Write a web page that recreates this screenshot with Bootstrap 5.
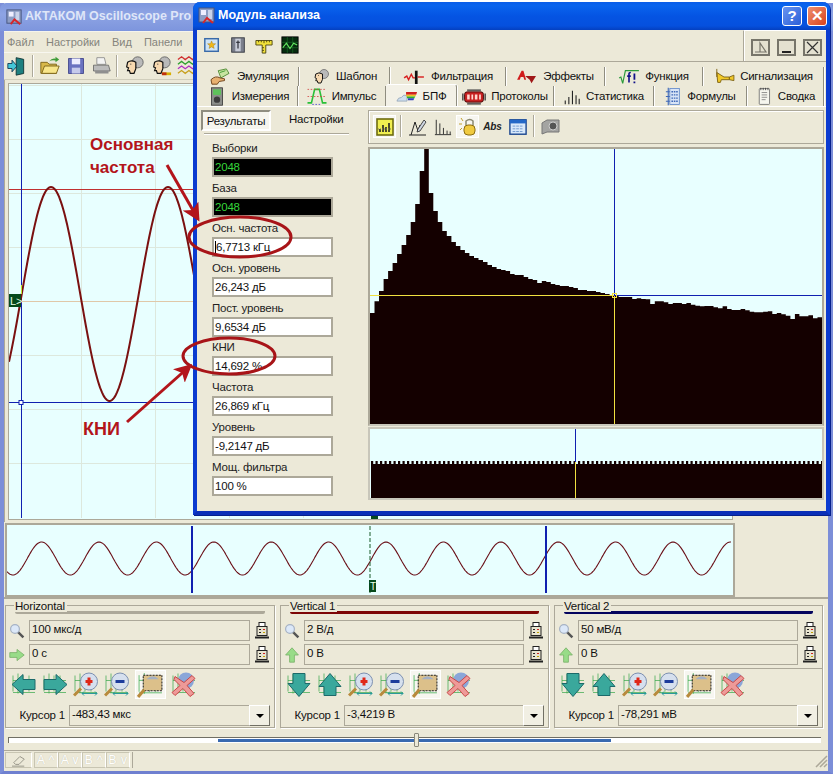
<!DOCTYPE html>
<html lang="ru">
<head>
<meta charset="UTF-8" />
<title>AKTAKOM Oscilloscope Pro</title>
<link href="https://cdn.jsdelivr.net/npm/bootstrap@5.3.2/dist/css/bootstrap.min.css" rel="stylesheet" />
<style>
html, body { margin: 0; background: #fff; }
body { position: relative; width: 834px; height: 774px; overflow: hidden; font: 11.5px/1.1 "Liberation Sans", Arial, sans-serif; letter-spacing: -.2px; color: #111; }
svg { display: block; flex: none; }

/* main window */
.app { width: 833px; height: 771px; margin-top: 3px; background: #ece9d8; border-left: 4px solid #7c8ed8; border-right: 5px solid #7c8ed8; border-bottom: 3px solid #6f80d0; }
.app-title { height: 28px; margin: 0 -5px 0 -4px; padding-left: 5px; gap: 1px; background: linear-gradient(#7f97de, #8ea4e4 40%, #7d95dd); color: #dfe6f8; font-size: 12.5px; font-weight: 700; letter-spacing: 0; border-radius: 6px 6px 0 0; }
.app-menu { height: 21px; gap: 12px; padding: 0 3px; color: #85847c; font-size: 11px; letter-spacing: 0; border-top: 1px solid #f5f4ec; }
.app-tools { height: 28px; padding-left: 3px; gap: 5px; border-top: 1px solid #f8f7f0; border-bottom: 1px solid #d0cdbb; }
.sep { width: 1px; height: 22px; background: #aca899; border-right: 1px solid #fff; box-sizing: content-box; }
.scope { height: 442px; padding: 3px 95px 2px 3px; border-left: 1px solid #aca899; }
.plot { background: #e8ffff; border: 1px solid #aca899; }
.overview { height: 75px; padding: 1px 93px 0 1px; }
.overview .plot { border-width: 2px; }

/* bottom panels */
.panels { gap: 5px; padding: 6px 5px 0 1px; height: 134px; border-top: 2px solid #aca899; }
.panel { width: 270px; height: 123px; border: 1px solid #aca899; box-shadow: 1px 1px 0 #fff; }
.panel + .panel { width: 269px; }
.panel-name { height: 9px; padding-left: 8px; margin-top: -4px; line-height: 9px; }
.panel-name span { background: #ece9d8; padding: 0 2px 0 1px; }
.panel-bar { height: 3px; margin: 0 9px 6px 9px; background: #aca899; border-radius: 0 0 2px 2px; }
.bar-red { background: #7d0606; }
.bar-blue { background: #04045e; }
.value-row { height: 21px; margin-bottom: 3px; padding: 0 4px 0 3px; gap: 4px; }
.value { flex: 1; height: 21px; padding: 2px; border: 1px solid #aca899; background: #ece9d8; }
.panel-tools { height: 32px; border-top: 1px solid #aca899; padding: 1px 0 0 5px; gap: 5px; }
.ptool { width: 26px; height: 29px; }
.ptool-on { width: 31px; background: #f7f6f0; border: 1px solid #fff; }
.cursor-row { height: 22px; margin-top: 5px; padding-right: 4px; }
.cursor-name { width: 63px; text-align: right; padding-right: 4px; padding-top: 4px; }
.cursor-box { flex: 1; height: 21px; border: 1px solid #aca899; padding: 2px; }
.drop { width: 21px; height: 21px; margin-left: -1px; background: #f1efe3; border: 1px solid; border-color: #fff #716f64 #716f64 #fff; }
.drop i { display: block; width: 0; border: 4px solid transparent; border-top: 4px solid #000; border-bottom: 0; }

/* slider and status */
.slider-row { height: 18px; padding: 6px 7px 0 4px; position: relative; }
.track { height: 6px; border-top: 1px solid #716f64; border-left: 1px solid #716f64; background: #fff; }
.track i { display: block; height: 3px; margin: 1px 0 0 209px; width: 393px; background: #3a6ab0; }
.thumb { position: absolute; left: 410px; top: 2px; width: 5px; height: 14px; background: #ece9d8; border: 1px solid #8a887c; border-radius: 1px; }
.status { height: 18px; border-top: 1px solid #aca899; margin-top: 1px; padding-left: 1px; }
.stat-btn { height: 16px; margin-top: 1px; width: 24px; border: 1px solid #c8c5b2; border-right-color: #fff; color: #fff; font-size: 12px; text-align: center; letter-spacing: .5px; padding-top: 1px; text-shadow: 0 0 1px #bdbaa8; }
.stat-btn.first { width: 27px; margin-right: 2px; padding: 0 4px; }
.stat-rest { flex: 1; height: 16px; margin: 1px 0 0 2px; border-left: 1px solid #aca899; }
.grip { margin: 1px 0 0 auto; }

/* analysis window */
.win { position: absolute; left: 193px; top: 2px; width: 637px; height: 513px; background: #ece9d8; border: 4px solid #0b3bd0; border-top: 0; border-bottom-color: #0a2fb8; border-radius: 7px 7px 0 0; box-shadow: 1px 1px 0 #06208c; }
.win-title { height: 28px; margin: 0 -4px; padding: 0 3px 0 4px; gap: 1px; background: linear-gradient(#0a5ce8, #0a64ee 12%, #0554e3 50%, #0550de 85%, #0440c0); color: #fff; font-size: 12.5px; font-weight: 700; letter-spacing: 0; border-radius: 7px 7px 0 0; }
.cap-btn { width: 20px; height: 20px; margin-left: 4px; border: 1px solid #fff; border-radius: 3px; color: #fff; font-size: 15px; text-align: center; line-height: 18px; background: linear-gradient(135deg, #6a94f0, #2a5fd8); }
.cap-close { background: linear-gradient(135deg, #ee9070, #d8431c); }
.win-bar { height: 32px; border-bottom: 1px solid #aca899; }
.win-icons { flex: 1; gap: 8px; padding: 6px 0 0 6px; }
.win-right { width: 83px; gap: 7px; padding: 2px 0 0 7px; border-left: 1px solid #aca899; border-top: 1px solid #fff; box-shadow: inset 1px 0 0 #fff; }
.mini { width: 19px; height: 17px; border: 2px solid #77756a; background: #e4e1d0; }
.tabs { display: grid; margin-left: 2px; width: 625px; }
.tabs-top { grid-template-columns: 100px 91px 116px 99px 98px 121px; height: 19px; margin-top: 5px; }
.tabs-low { grid-template-columns: 99px 88px 71px 97px 100px 93px 77px; height: 20px; }
.tabs .nav-link { display: flex; align-items: center; justify-content: center; gap: 5px; padding: 0; color: #111; font-size: 11.5px; letter-spacing: -.25px; border-right: 1px solid #8f8d80; box-shadow: 1px 0 0 #fff; border-radius: 0; height: 100%; white-space: nowrap; }
.tabs .nav-link.active { background: #f3f1e7; margin-top: -2px; height: 23px; border-top: 1px solid #fff; border-radius: 3px 3px 0 0; }
.win-body { height: 404px; border-top: 1px solid #fff; }
.left-col { width: 171px; }
.subtabs { height: 26px; padding: 3px 0 0 4px; }
.subtab { width: 70px; height: 21px; background: #f6f5ee; border: 2px solid; border-color: #8f8d80 #fff #fff #8f8d80; text-align: center; padding-top: 3px; }
.subtab2 { padding: 3px 0 0 18px; }
.rule { height: 2px; margin: 0 19px 2px 7px; background: #aca899; border-bottom: 1px solid #fff; }
.field-list { padding-left: 15px; }
.field { height: 39.9px; }
.field label { display: block; height: 20px; padding-top: 5px; margin: 0; color: #222; }
.field .form-control { width: 121px; height: 20px; padding: 1px; border: 2px solid #aca899; border-radius: 0; font-size: 11.5px; line-height: 14px; color: #111; background: #fff; }
.field .form-control.dark { background: #000; color: #35d43a; }
.caret { border-left: 1px solid #000; }
.right-col { width: 456px; }
.graph-tools { height: 34px; margin-top: 3px; border: 1px solid #aca899; box-shadow: inset 1px 1px 0 #fff; padding: 4px 0 0 4px; }
.gt { width: 23px; height: 23px; }
.gt + .gt { margin-left: 2px; }
.gt-on { background: #f7f6f0; border: 1px solid #fff; }
.gt-abs { font: italic 700 10px "Liberation Sans", Arial, sans-serif; text-align: center; padding-top: 6px; color: #222; }
.graph { width: 456px; }
.graph-main { height: 279px; margin-top: 3px; border: 2px solid #aca899; border-bottom-color: #c8c6ba; }
.graph-small { height: 73px; margin-top: 1px; border: 2px solid #c8c6ba; }

/* annotations drawn on top of the screenshot */
.marks { position: absolute; left: 0; top: 0; pointer-events: none; }
.note { position: absolute; color: #b3151b; font: 700 17px/23px "Liberation Sans", Arial, sans-serif; letter-spacing: 0; }
.note-freq { left: 90px; top: 133px; }
.note-thd { left: 83px; top: 418px; font-size: 18px; }
</style>
</head>
<body>

<svg width="0" height="0" class="position-absolute">
  <symbol id="i-app" viewBox="0 0 20 20"><rect x="2" y="2" width="15" height="14" fill="#8d9dc4" stroke="#47557f"/><rect x="4" y="4" width="5" height="5" fill="#eef"/><rect x="11" y="4" width="4" height="9" fill="#c9d3ea"/><path d="M6 17l4-5 6 5" fill="none" stroke="#d8262a" stroke-width="2"/></symbol>
  <symbol id="i-door" viewBox="0 0 24 24"><path d="M11 2l9 2v17l-9 2z" fill="#1d8080" stroke="#0a2b2b"/><path d="M1 9h5V5l6 7-6 7v-4H1z" fill="#45c6d6" stroke="#0a2b4a"/></symbol>
  <symbol id="i-folder" viewBox="0 0 24 24"><path d="M2 20V8h7l2 2h8v10z" fill="#d8b84a" stroke="#7c6418"/><path d="M3 20l3-8h16l-3 8z" fill="#f8e58a" stroke="#7c6418"/><path d="M11 7q3-4 7-3V2l4 3-4 3V6q-4-1-7 1z" fill="#3f9c38"/></symbol>
  <symbol id="i-floppy" viewBox="0 0 24 24"><path d="M3 3h18v18H3z" fill="#6a72c0" stroke="#3c4188"/><rect x="7" y="3" width="10" height="7" fill="#eef"/><rect x="7" y="14" width="10" height="7" fill="#c6caeb"/></symbol>
  <symbol id="i-printer" viewBox="0 0 24 24"><path d="M7 2h9l2 8H7z" fill="#f3f3f3" stroke="#888"/><path d="M3 11h18l2 7H3z" fill="#bbb" stroke="#666"/><path d="M5 18h16v3H5z" fill="#8f8f8f"/></symbol>
  <symbol id="i-face" viewBox="0 0 24 24"><circle cx="16" cy="8" r="6" fill="#b9b9b9" stroke="#666"/><path d="M5 8q4-3 9 0v7l-2 5H8l-1-3H5l1-3-2-1z" fill="#f7d9b0" stroke="#111" stroke-width="1.3"/><path d="M8 10h1" stroke="#111"/></symbol>
  <symbol id="i-face2" viewBox="0 0 24 24"><use href="#i-face"/><rect x="13" y="19" width="10" height="3" fill="#d8b000"/><rect x="13" y="19" width="5" height="3" fill="#c03010"/></symbol>
  <symbol id="i-wave" viewBox="0 0 24 24"><g fill="none" stroke-width="1.4"><path d="M1 5l4-3 4 3 4-3 4 3 4-3" stroke="#d03030"/><path d="M1 10l4-3 4 3 4-3 4 3 4-3" stroke="#30a030"/><path d="M1 15l4-3 4 3 4-3 4 3 4-3" stroke="#b030c0"/><path d="M1 20l4-3 4 3 4-3 4 3 4-3" stroke="#c8a020"/></g></symbol>
  <symbol id="i-star" viewBox="0 0 20 20"><rect x="2" y="3" width="15" height="14" fill="#cfe4f6" stroke="#3a6aa8" stroke-width="1.6"/><path d="M9.500 5.500l1.300 3 3.200.2-2.500 2 .9 3.100-2.900-1.700-2.700 1.700.8-3.100-2.500-2 3.200-.2z" fill="#f0b818" stroke="#a87810" stroke-width=".5"/></symbol>
  <symbol id="i-book" viewBox="0 0 20 20"><rect x="3" y="2" width="14" height="16" fill="#7b7f8c" stroke="#33363f"/><rect x="7" y="3" width="6" height="14" fill="#c8ccd8"/><path d="M10 5v9M8 7h4" stroke="#33363f" stroke-width="1.400"/></symbol>
  <symbol id="i-ruler" viewBox="0 0 20 20"><path d="M1 5h18v5h-7v9H8v-9H1z" fill="#f2e23a" stroke="#4a4410"/><path d="M4 5v2M7 5v2M10 5v3M13 5v2M16 5v2M8 13h2M8 16h2" stroke="#4a4410"/></symbol>
  <symbol id="i-scope" viewBox="0 0 20 20"><rect x="1" y="1" width="18" height="18" fill="#062c0e" stroke="#000"/><path d="M1 7h18M1 13h18M7 1v18M13 1v18" stroke="#1f7a2c" stroke-width=".6"/><path d="M2 13l4-5 4 6 4-6 4 2" fill="none" stroke="#64e860" stroke-width="1.2"/></symbol>
  <symbol id="i-emu" viewBox="0 0 24 20"><path d="M10 3l9-2 3 5-9 5z" fill="#c8e4a0" stroke="#4c8a30"/><path d="M12 5l6-2" stroke="#3a9a2e"/><path d="M2 13q5-5 10-2l5 1v2l-6 1-2 3H3z" fill="#e8b070" stroke="#6a3c14"/></symbol>
  <symbol id="i-filter" viewBox="0 0 24 20"><path d="M1 11l3-2 2 4 3-6 2 4h4" fill="none" stroke="#d82020" stroke-width="1.600"/><rect x="13" y="3" width="3" height="15" fill="#111"/><path d="M16 10h7" stroke="#d82020" stroke-width="1.600"/></symbol>
  <symbol id="i-fx" viewBox="0 0 24 20"><path d="M1 13L6 3h2l3 10H9l-1-3H5l-1 3z" fill="#d01c1c"/><path d="M10 9h12l-5 8-2-4z" fill="#a01818"/></symbol>
  <symbol id="i-func" viewBox="0 0 24 20"><path d="M1 11l2-1 2 7 3-14h15" fill="none" stroke="#2b9a3a" stroke-width="1.300"/><path d="M12 16V6q0-1 2-1M10 9h4" fill="none" stroke="#101088" stroke-width="1.800"/><path d="M18 6v7M18 15v2" stroke="#101088" stroke-width="2"/></symbol>
  <symbol id="i-horn" viewBox="0 0 24 20"><path d="M4 1v9M4 5l8 5h6v3H9l-1 3H5z" fill="#f0c828" stroke="#7a6010"/><path d="M18 10l5-2v6l-5-1z" fill="#f0c828" stroke="#7a6010"/></symbol>
  <symbol id="i-meter" viewBox="0 0 24 24"><rect x="5" y="1" width="14" height="22" fill="#8c8e8a" stroke="#333"/><rect x="7" y="3" width="10" height="7" fill="#5ec25a"/><circle cx="12" cy="16" r="4" fill="#3c3c3c"/></symbol>
  <symbol id="i-pulse" viewBox="0 0 24 24"><path d="M0 20h5L9 3h6l4 17h5" fill="none" stroke="#28c038" stroke-width="2"/><path d="M0 3h24M0 12h24" stroke="#d04040" stroke-dasharray="2 2"/><path d="M6 22h12" stroke="#4040d0" stroke-dasharray="2 2"/></symbol>
  <symbol id="i-fft" viewBox="0 0 24 16"><path d="M1 13q1-4 5-4 2-4 6-2v6z" fill="#cfe0f0" stroke="#9ab"/><path d="M11 3h12l-1 3H11z" fill="#d02020"/><path d="M11 6h11l-1 2H11z" fill="#f0c020"/><path d="M12 8h9l-1 2h-8z" fill="#30b030"/><path d="M13 10h7l-1 2h-6z" fill="#3040c0"/></symbol>
  <symbol id="i-proto" viewBox="0 0 28 20"><rect x="3" y="4" width="22" height="12" rx="3" fill="#c82020" stroke="#300"/><path d="M6 7h3v6H6zM11 7h2v6h-2zM15 7h3v6h-3zM20 7h2v6h-2z" fill="#ffd8d0"/><path d="M6 2h16M6 18h16M1 6v8M27 6v8" stroke="#333" stroke-width="1.500"/></symbol>
  <symbol id="i-stat" viewBox="0 0 20 20"><path d="M2.500 18v-4M6.500 18V10M10.500 18V3M14.500 18V8M18 18v-6" stroke="#222" stroke-width="1.200"/></symbol>
  <symbol id="i-calc" viewBox="0 0 20 24"><rect x="6" y="2" width="12" height="20" fill="#d8e4f6" stroke="#5a84c8"/><path d="M8 6h8M8 10h8M8 14h8M8 18h8" stroke="#3e68b8" stroke-width="1.600" stroke-dasharray="2 1"/><path d="M4 1v22M1 6h5M1 12h5M1 18h5" stroke="#3e68b8" stroke-width="1.400"/></symbol>
  <symbol id="i-note" viewBox="0 0 20 24"><rect x="4" y="2" width="13" height="20" rx="1" fill="#f6f6ee" stroke="#666"/><path d="M7 7h7M7 10h7M7 13h7M7 16h5" stroke="#777"/><path d="M6 1v3M9 1v3M12 1v3M15 1v3" stroke="#333"/></symbol>
  <symbol id="i-chart" viewBox="0 0 20 20"><rect x="2" y="2" width="16" height="16" fill="#f0ee50" stroke="#6e6c10" stroke-width="1.600"/><path d="M5 15v-3M8 15V8M11 15v-5M14 15V6" stroke="#222" stroke-width="1.600"/><path d="M3 12h14" stroke="#777" stroke-dasharray="1 1"/></symbol>
  <symbol id="i-pencil" viewBox="0 0 20 20"><path d="M1 18h17M3 18L7 5M7 5l3 9M10 14l2-6" fill="none" stroke="#222"/><path d="M10 12l6-9 2 2-6 9-3 1z" fill="#cfd6e2" stroke="#222" stroke-width=".8"/></symbol>
  <symbol id="i-bars" viewBox="0 0 20 20"><path d="M2.500 18V2M6.500 18V6M10.500 18V11M14.500 18v-4M18 18v-3M1 18.500h18" stroke="#222" stroke-width="1"/></symbol>
  <symbol id="i-lock" viewBox="0 0 20 20"><rect x="6" y="8" width="11" height="10" rx="4" fill="#f0ca40" stroke="#8c6c10"/><path d="M8 8V4q4-3 7 0v4" fill="none" stroke="#8c8a70" stroke-width="1.500"/><path d="M3 1l2 3M1 7h3M4 11l-2 2" stroke="#c0a030"/></symbol>
  <symbol id="i-table" viewBox="0 0 20 20"><rect x="1" y="2" width="18" height="16" fill="#d8e8fa" stroke="#14408c" stroke-width="1.500"/><rect x="1" y="2" width="18" height="4" fill="#2468c8"/><path d="M4 9h12M4 12h12M4 15h12" stroke="#6c94cc" stroke-dasharray="3 1"/></symbol>
  <symbol id="i-camera" viewBox="0 0 20 20"><path d="M1 6l5-3h12v12H6l-5 2z" fill="#a4a4a2" stroke="#777"/><circle cx="12" cy="9" r="4" fill="#555" stroke="#ccc"/></symbol>
  <symbol id="i-zoom" viewBox="0 0 20 20"><path d="M11 11l7 7" stroke="#555" stroke-width="3"/><circle cx="7.500" cy="7.500" r="5.500" fill="#dce8f8" stroke="#a6b2c4" stroke-width="1.500"/></symbol>
  <symbol id="i-go-right" viewBox="0 0 20 20"><path d="M1 7h9V3l9 7-9 7v-4H1z" fill="#98dc88" stroke="#78b068"/></symbol>
  <symbol id="i-go-up" viewBox="0 0 20 20"><path d="M7 19v-9H2l8-9 8 9h-5v9z" fill="#98dc88" stroke="#78b068"/></symbol>
  <symbol id="i-dev" viewBox="0 0 16 18"><rect x="5" y="1" width="6" height="4" fill="#fff" stroke="#222"/><rect x="3" y="5" width="10" height="9" fill="#e8e4d0" stroke="#222"/><path d="M5 8h2M5 11h2" stroke="#222"/><path d="M9 8h2" stroke="#d02020"/><path d="M9 11h2" stroke="#c0a000"/><path d="M1 16h14" stroke="#222" stroke-width="2"/></symbol>
  <g id="grid-bg"><path d="M2 4v16M7 2v20M12 4v16M18 4v16M2 9h22M2 21h22" stroke="#35a848" stroke-width=".7" fill="none"/></g>
  <symbol id="i-left" viewBox="0 0 26 26"><use href="#grid-bg"/><path d="M1 13l11-10v5h12v10H12v5z" fill="#3aa89c" stroke="#1c6a6a"/></symbol>
  <symbol id="i-right" viewBox="0 0 26 26"><use href="#grid-bg"/><path d="M25 13L14 3v5H2v10h12v5z" fill="#3aa89c" stroke="#1c6a6a"/></symbol>
  <symbol id="i-down" viewBox="0 0 26 26"><use href="#grid-bg"/><path d="M13 25L2 12h5V2h12v10h5z" fill="#3aa89c" stroke="#1c6a6a"/></symbol>
  <symbol id="i-up" viewBox="0 0 26 26"><use href="#grid-bg"/><path d="M13 2L2 15h5v9h12v-9h5z" fill="#3aa89c" stroke="#1c6a6a"/></symbol>
  <symbol id="i-plus" viewBox="0 0 26 26"><use href="#grid-bg"/><circle cx="16" cy="10" r="8.500" fill="#d6e0ee" stroke="#7c90b0"/><path d="M12.500 10h7M16 6v8" stroke="#e02818" stroke-width="3"/><path d="M1 24l7-7" stroke="#b88a3c" stroke-width="3"/><path d="M9 22h15M9 22l2-2M9 22l2 2M24 22l-2-2M24 22l-2 2" stroke="#2a9a9a" fill="none"/></symbol>
  <symbol id="i-minus" viewBox="0 0 26 26"><use href="#grid-bg"/><circle cx="16" cy="10" r="8.500" fill="#d6e0ee" stroke="#7c90b0"/><path d="M11.500 10h9" stroke="#1c3c9c" stroke-width="3"/><path d="M1 24l7-7" stroke="#b88a3c" stroke-width="3"/><path d="M9 22h15M9 22l2-2M9 22l2 2M24 22l-2-2M24 22l-2 2" stroke="#2a9a9a" fill="none"/></symbol>
  <symbol id="i-area" viewBox="0 0 26 26"><use href="#grid-bg"/><rect x="6" y="4" width="18" height="15" fill="#dcc08a" stroke="#222" stroke-dasharray="2 1"/><path d="M9 8q6-6 12 0" fill="#a4b0c4"/><path d="M1 25l6-7" stroke="#b88a3c" stroke-width="3"/></symbol>
  <symbol id="i-cancel" viewBox="0 0 26 26"><use href="#grid-bg"/><circle cx="15" cy="9" r="8" fill="#8aa6d8"/><path d="M4 5l9 6 8-7 3 3-8 7 7 8-4 3-7-8-8 7-3-3 8-7-6-6z" fill="#ee9a98" stroke="#c84848"/></symbol>
</svg>

<div class="app d-flex flex-column">
  <div class="app-title d-flex align-items-center"><svg width="19" height="19"><use href="#i-app"/></svg><span>АКТАКОМ Oscilloscope Pro</span></div>
  <div class="app-menu d-flex align-items-center"><span>Файл</span><span>Настройки</span><span>Вид</span><span>Панели</span></div>
  <div class="app-tools d-flex align-items-center">
    <svg width="20" height="20"><use href="#i-door"/></svg><span class="sep"></span>
    <svg width="22" height="22"><use href="#i-folder"/></svg><svg width="20" height="20"><use href="#i-floppy"/></svg><svg width="20" height="20"><use href="#i-printer"/></svg><span class="sep"></span>
    <svg width="22" height="22"><use href="#i-face"/></svg><svg width="22" height="22"><use href="#i-face2"/></svg><svg width="22" height="22"><use href="#i-wave"/></svg>
  </div>

  <div class="scope">
    <div class="plot h-100">
      <svg id="scope-plot" width="726" height="435" viewBox="7 84 726 435"></svg>
    </div>
  </div>

  <div class="overview d-flex">
    <div class="plot flex-fill">
      <svg id="over-plot" width="726" height="70" viewBox="7 525 726 70"></svg>
    </div>
  </div>

  <div class="panels d-flex">
    <div class="panel">
      <div class="panel-name"><span>Horizontal</span></div>
      <div class="panel-bar"></div>
      <div class="value-row d-flex align-items-center"><svg width="16" height="18"><use href="#i-zoom"/></svg><div class="value">100 мкс/д</div><svg width="16" height="19"><use href="#i-dev"/></svg></div>
      <div class="value-row d-flex align-items-center"><svg width="16" height="18"><use href="#i-go-right"/></svg><div class="value">0 с</div><svg width="16" height="19"><use href="#i-dev"/></svg></div>
      <div class="panel-tools d-flex">
        <svg class="ptool" viewBox="0 0 26 26"><use href="#i-left"/></svg><svg class="ptool" viewBox="0 0 26 26"><use href="#i-right"/></svg><svg class="ptool" viewBox="0 0 26 26"><use href="#i-plus"/></svg><svg class="ptool" viewBox="0 0 26 26"><use href="#i-minus"/></svg><svg class="ptool ptool-on" viewBox="0 0 26 26"><use href="#i-area"/></svg><svg class="ptool" viewBox="0 0 26 26"><use href="#i-cancel"/></svg>
      </div>
      <div class="cursor-row d-flex"><div class="cursor-name">Курсор 1</div><div class="cursor-box">-483,43 мкс</div><div class="drop d-flex align-items-center justify-content-center"><i></i></div></div>
    </div>
    <div class="panel">
      <div class="panel-name"><span>Vertical 1</span></div>
      <div class="panel-bar bar-red"></div>
      <div class="value-row d-flex align-items-center"><svg width="16" height="18"><use href="#i-zoom"/></svg><div class="value">2 В/д</div><svg width="16" height="19"><use href="#i-dev"/></svg></div>
      <div class="value-row d-flex align-items-center"><svg width="16" height="18"><use href="#i-go-up"/></svg><div class="value">0 В</div><svg width="16" height="19"><use href="#i-dev"/></svg></div>
      <div class="panel-tools d-flex">
        <svg class="ptool" viewBox="0 0 26 26"><use href="#i-down"/></svg><svg class="ptool" viewBox="0 0 26 26"><use href="#i-up"/></svg><svg class="ptool" viewBox="0 0 26 26"><use href="#i-plus"/></svg><svg class="ptool" viewBox="0 0 26 26"><use href="#i-minus"/></svg><svg class="ptool ptool-on" viewBox="0 0 26 26"><use href="#i-area"/></svg><svg class="ptool" viewBox="0 0 26 26"><use href="#i-cancel"/></svg>
      </div>
      <div class="cursor-row d-flex"><div class="cursor-name">Курсор 1</div><div class="cursor-box">-3,4219 В</div><div class="drop d-flex align-items-center justify-content-center"><i></i></div></div>
    </div>
    <div class="panel">
      <div class="panel-name"><span>Vertical 2</span></div>
      <div class="panel-bar bar-blue"></div>
      <div class="value-row d-flex align-items-center"><svg width="16" height="18"><use href="#i-zoom"/></svg><div class="value">50 мВ/д</div><svg width="16" height="19"><use href="#i-dev"/></svg></div>
      <div class="value-row d-flex align-items-center"><svg width="16" height="18"><use href="#i-go-up"/></svg><div class="value">0 В</div><svg width="16" height="19"><use href="#i-dev"/></svg></div>
      <div class="panel-tools d-flex">
        <svg class="ptool" viewBox="0 0 26 26"><use href="#i-down"/></svg><svg class="ptool" viewBox="0 0 26 26"><use href="#i-up"/></svg><svg class="ptool" viewBox="0 0 26 26"><use href="#i-plus"/></svg><svg class="ptool" viewBox="0 0 26 26"><use href="#i-minus"/></svg><svg class="ptool ptool-on" viewBox="0 0 26 26"><use href="#i-area"/></svg><svg class="ptool" viewBox="0 0 26 26"><use href="#i-cancel"/></svg>
      </div>
      <div class="cursor-row d-flex"><div class="cursor-name">Курсор 1</div><div class="cursor-box">-78,291 мВ</div><div class="drop d-flex align-items-center justify-content-center"><i></i></div></div>
    </div>
  </div>

  <div class="slider-row"><div class="track"><i></i></div><div class="thumb"></div></div>

  <div class="status d-flex">
    <div class="stat-btn first"><svg width="18" height="14" viewBox="0 0 18 16"><path d="M3 11l7-7 5 3-6 6H5zM1 15h14" fill="none" stroke="#8f8d80"/></svg></div>
    <div class="stat-btn">A ^</div><div class="stat-btn">A v</div><div class="stat-btn">B ^</div><div class="stat-btn">B v</div>
    <div class="stat-rest d-flex"><svg class="grip" width="14" height="15" viewBox="0 0 14 15"><path d="M13 3L2 14M13 7l-7 7M13 11l-3 3" stroke="#aca899" stroke-width="1.500"/></svg></div>
  </div>
</div>

<div class="win d-flex flex-column">
  <div class="win-title d-flex align-items-center">
    <svg width="20" height="20"><use href="#i-app"/></svg><span class="flex-fill">Модуль анализа</span>
    <div class="cap-btn">?</div><div class="cap-btn cap-close">✕</div>
  </div>
  <div class="win-bar d-flex">
    <div class="win-icons d-flex">
      <svg width="18" height="18"><use href="#i-star"/></svg><svg width="18" height="18"><use href="#i-book"/></svg><svg width="18" height="18"><use href="#i-ruler"/></svg><svg width="18" height="18"><use href="#i-scope"/></svg>
    </div>
    <div class="win-right d-flex align-items-center">
      <div class="mini"><svg width="15" height="13" viewBox="0 0 15 13"><path d="M2 11h11L7 2v9" fill="none" stroke="#77756a" stroke-width="1.200"/></svg></div>
      <div class="mini"><svg width="15" height="13" viewBox="0 0 15 13"><path d="M3 11h9" stroke="#222" stroke-width="2"/></svg></div>
      <div class="mini"><svg width="15" height="13" viewBox="0 0 15 13"><path d="M2 1l11 11M13 1L2 12" stroke="#333" stroke-width="1.200"/></svg></div>
    </div>
  </div>

  <ul class="nav tabs tabs-top list-unstyled mb-0">
    <li class="nav-item"><a class="nav-link" href="#"><svg width="24" height="18"><use href="#i-emu"/></svg>Эмуляция</a></li>
    <li class="nav-item"><a class="nav-link" href="#"><svg width="20" height="18"><use href="#i-face"/></svg>Шаблон</a></li>
    <li class="nav-item"><a class="nav-link" href="#"><svg width="24" height="18"><use href="#i-filter"/></svg>Фильтрация</a></li>
    <li class="nav-item"><a class="nav-link" href="#"><svg width="22" height="18"><use href="#i-fx"/></svg>Эффекты</a></li>
    <li class="nav-item"><a class="nav-link" href="#"><svg width="22" height="18"><use href="#i-func"/></svg>Функция</a></li>
    <li class="nav-item"><a class="nav-link" href="#"><svg width="22" height="18"><use href="#i-horn"/></svg>Сигнализация</a></li>
  </ul>
  <ul class="nav tabs tabs-low list-unstyled mb-0">
    <li class="nav-item"><a class="nav-link" href="#"><svg width="20" height="19"><use href="#i-meter"/></svg>Измерения</a></li>
    <li class="nav-item"><a class="nav-link" href="#"><svg width="20" height="19"><use href="#i-pulse"/></svg>Импульс</a></li>
    <li class="nav-item"><a class="nav-link active" href="#"><svg width="22" height="15"><use href="#i-fft"/></svg>БПФ</a></li>
    <li class="nav-item"><a class="nav-link" href="#"><svg width="24" height="18"><use href="#i-proto"/></svg>Протоколы</a></li>
    <li class="nav-item"><a class="nav-link" href="#"><svg width="18" height="18"><use href="#i-stat"/></svg>Статистика</a></li>
    <li class="nav-item"><a class="nav-link" href="#"><svg width="18" height="19"><use href="#i-calc"/></svg>Формулы</a></li>
    <li class="nav-item"><a class="nav-link" href="#"><svg width="18" height="19"><use href="#i-note"/></svg>Сводка</a></li>
  </ul>

  <div class="win-body d-flex">
    <div class="left-col">
      <div class="subtabs d-flex"><div class="subtab">Результаты</div><div class="subtab2">Настройки</div></div>
      <div class="rule"></div>
      <div class="field-list">
        <div class="field"><label>Выборки</label><div class="form-control dark">2048</div></div>
        <div class="field"><label>База</label><div class="form-control dark">2048</div></div>
        <div class="field"><label>Осн. частота</label><div class="form-control"><span class="caret">6,7713 кГц</span></div></div>
        <div class="field"><label>Осн. уровень</label><div class="form-control">26,243 дБ</div></div>
        <div class="field"><label>Пост. уровень</label><div class="form-control">9,6534 дБ</div></div>
        <div class="field"><label>КНИ</label><div class="form-control">14,692 %</div></div>
        <div class="field"><label>Частота</label><div class="form-control">26,869 кГц</div></div>
        <div class="field"><label>Уровень</label><div class="form-control">-9,2147 дБ</div></div>
        <div class="field"><label>Мощ. фильтра</label><div class="form-control">100 %</div></div>
      </div>
    </div>
    <div class="right-col">
      <div class="graph-tools d-flex">
        <div class="gt gt-on d-flex align-items-center justify-content-center"><svg width="20" height="20"><use href="#i-chart"/></svg></div>
        <span class="sep mx-1"></span>
        <div class="gt d-flex align-items-center justify-content-center"><svg width="20" height="20"><use href="#i-pencil"/></svg></div>
        <div class="gt d-flex align-items-center justify-content-center"><svg width="18" height="18"><use href="#i-bars"/></svg></div>
        <div class="gt gt-on d-flex align-items-center justify-content-center"><svg width="20" height="20"><use href="#i-lock"/></svg></div>
        <div class="gt gt-abs">Abs</div>
        <div class="gt d-flex align-items-center justify-content-center"><svg width="18" height="18"><use href="#i-table"/></svg></div>
        <span class="sep mx-1"></span>
        <div class="gt d-flex align-items-center justify-content-center"><svg width="20" height="20"><use href="#i-camera"/></svg></div>
      </div>
      <div class="plot graph graph-main"><svg id="fft-main" width="452" height="275" viewBox="370 150 452 275"></svg></div>
      <div class="plot graph graph-small"><svg id="fft-small" width="452" height="69" viewBox="370 430 452 69"></svg></div>
    </div>
  </div>
</div>

<svg class="marks" width="834" height="774" viewBox="0 0 834 774">
  <defs><marker id="head" markerWidth="6" markerHeight="6" refX="5" refY="3" orient="auto"><path d="M0 0l6 3-6 3 1.500-3z" fill="#b3151b"/></marker></defs>
  <ellipse cx="240" cy="237" rx="51" ry="20" fill="none" stroke="#a81418" stroke-width="3"/>
  <ellipse cx="229" cy="356" rx="46" ry="18" fill="none" stroke="#a81418" stroke-width="3"/>
  <path d="M167 165L198 219" stroke="#b3151b" stroke-width="3" marker-end="url(#head)"/>
  <path d="M127 422L190 366" stroke="#b3151b" stroke-width="3" marker-end="url(#head)"/>
</svg>
<div class="note note-freq">Основная<br>частота</div>
<div class="note note-thd">КНИ</div>

<script>
const SVG_NS = 'http://www.w3.org/2000/svg';

function add(svg, tag, attrs) {
    const el = document.createElementNS(SVG_NS, tag);
    for (const k in attrs) el.setAttribute(k, attrs[k]);
    svg.appendChild(el);
    return el;
}

function line(svg, x1, y1, x2, y2, color, width) {
    add(svg, 'line', { x1, y1, x2, y2, stroke: color, 'stroke-width': width || 1 });
}

function sine(x0, x1, mid, amp, peak, period) {
    let pts = [];
    for (let x = x0; x <= x1; x += 1) {
        pts.push(x + ',' + (mid - amp * Math.cos(2 * Math.PI * (x - peak) / period)).toFixed(1));
    }
    return pts.join(' ');
}

// big scope view
const scope = document.getElementById('scope-plot');
[85, 139, 193, 247, 355, 409, 463].forEach(y => line(scope, 7, y + .5, 733, y + .5, '#dde8dd'));
[79, 153, 227, 301, 375].forEach(x => line(scope, x + .5, 84, x + .5, 518, '#dde8dd'));
line(scope, 7, 301.5, 733, 301.5, '#e0c8a8');
line(scope, 7, 189.5, 733, 189.5, '#c03030');
line(scope, 7, 402.5, 733, 402.5, '#1020b0');
line(scope, 19.5, 84, 19.5, 518, '#1020b0');
add(scope, 'polyline', { points: sine(7, 192, 294, 107, 49, 117), fill: 'none', stroke: '#7a1010', 'stroke-width': 2 });
add(scope, 'rect', { x: 17, y: 400.500, width: 4, height: 4, fill: '#fff', stroke: '#1020b0' });
line(scope, 19.5, 285, 19.5, 294, '#b8e830');
add(scope, 'rect', { x: 7, y: 294, width: 12, height: 13, fill: '#064a1c' });
add(scope, 'text', { x: 8, y: 305, fill: '#e8ffe8', 'font-size': 11, 'font-family': 'Liberation Sans, sans-serif' }).textContent = 'L>';
add(scope, 'rect', { x: 369, y: 514, width: 7, height: 5, fill: '#064a1c' });

// overview
const over = document.getElementById('over-plot');
add(over, 'polyline', { points: sine(7, 731, 558.5, 16.5, 41.6, 57.4), fill: 'none', stroke: '#6a1018', 'stroke-width': 1.1 });
line(over, 192, 526, 192, 593, '#1020b0', 2);
line(over, 546, 526, 546, 593, '#1020b0', 2);
add(over, 'line', { x1: 370, y1: 526, x2: 370, y2: 593, stroke: '#185a28', 'stroke-dasharray': '4 2' });
add(over, 'rect', { x: 369, y: 580, width: 7, height: 12, fill: '#064a1c' });
add(over, 'text', { x: 370, y: 590, fill: '#e8ffe8', 'font-size': 10, 'font-family': 'Liberation Sans, sans-serif' }).textContent = 'T';

// spectrum, tops of the 100 bins
const bins = [522,487,456,420,396,372,345,318,288,249,195,96,30,162,216,249,276,291,309,321,
    333,342,351,357,363,369,378,384,390,393,396,405,408,408,414,420,423,432,426,429,
    435,438,441,441,444,447,453,453,456,456,459,462,465,468,468,474,474,474,480,478,
    480,481,495,487,487,490,495,492,492,495,492,497,500,502,501,501,505,508,502,510,
    513,513,510,514,518,520,520,518,517,525,522,526,530,540,525,532,532,529,538,535];
const fft = document.getElementById('fft-main');
let d = 'M370 425';
bins.forEach((v, i) => {
    const top = 140 + v / 3;
    d += 'L' + (370 + i * 4.52).toFixed(1) + ' ' + top.toFixed(1) + 'L' + (370 + (i + 1) * 4.52).toFixed(1) + ' ' + top.toFixed(1);
});
add(fft, 'path', { d: d + 'L822 425Z', fill: '#140000' });
line(fft, 614.5, 149, 614.5, 296, '#1020b0');
line(fft, 614.5, 296, 614.5, 425, '#f0e040');
line(fft, 370, 296.5, 614, 296.5, '#f0e040');
line(fft, 614, 296.5, 822, 296.5, '#1020b0');
add(fft, 'rect', { x: 612.5, y: 294.5, width: 4, height: 4, fill: 'none', stroke: '#f0e040' });

const small = document.getElementById('fft-small');
add(small, 'rect', { x: 371, y: 465, width: 451, height: 34, fill: '#140000' });
add(small, 'line', { x1: 371, y1: 463.500, x2: 822, y2: 463.500, stroke: '#140000', 'stroke-width': 3, 'stroke-dasharray': '2.200 2.300' });
line(small, 575.5, 430, 575.5, 463, '#1020b0');
line(small, 575.5, 463, 575.5, 499, '#f0e040');
</script>
<script src="https://cdn.jsdelivr.net/npm/bootstrap@5.3.2/dist/js/bootstrap.bundle.min.js"></script>
</body>
</html>
